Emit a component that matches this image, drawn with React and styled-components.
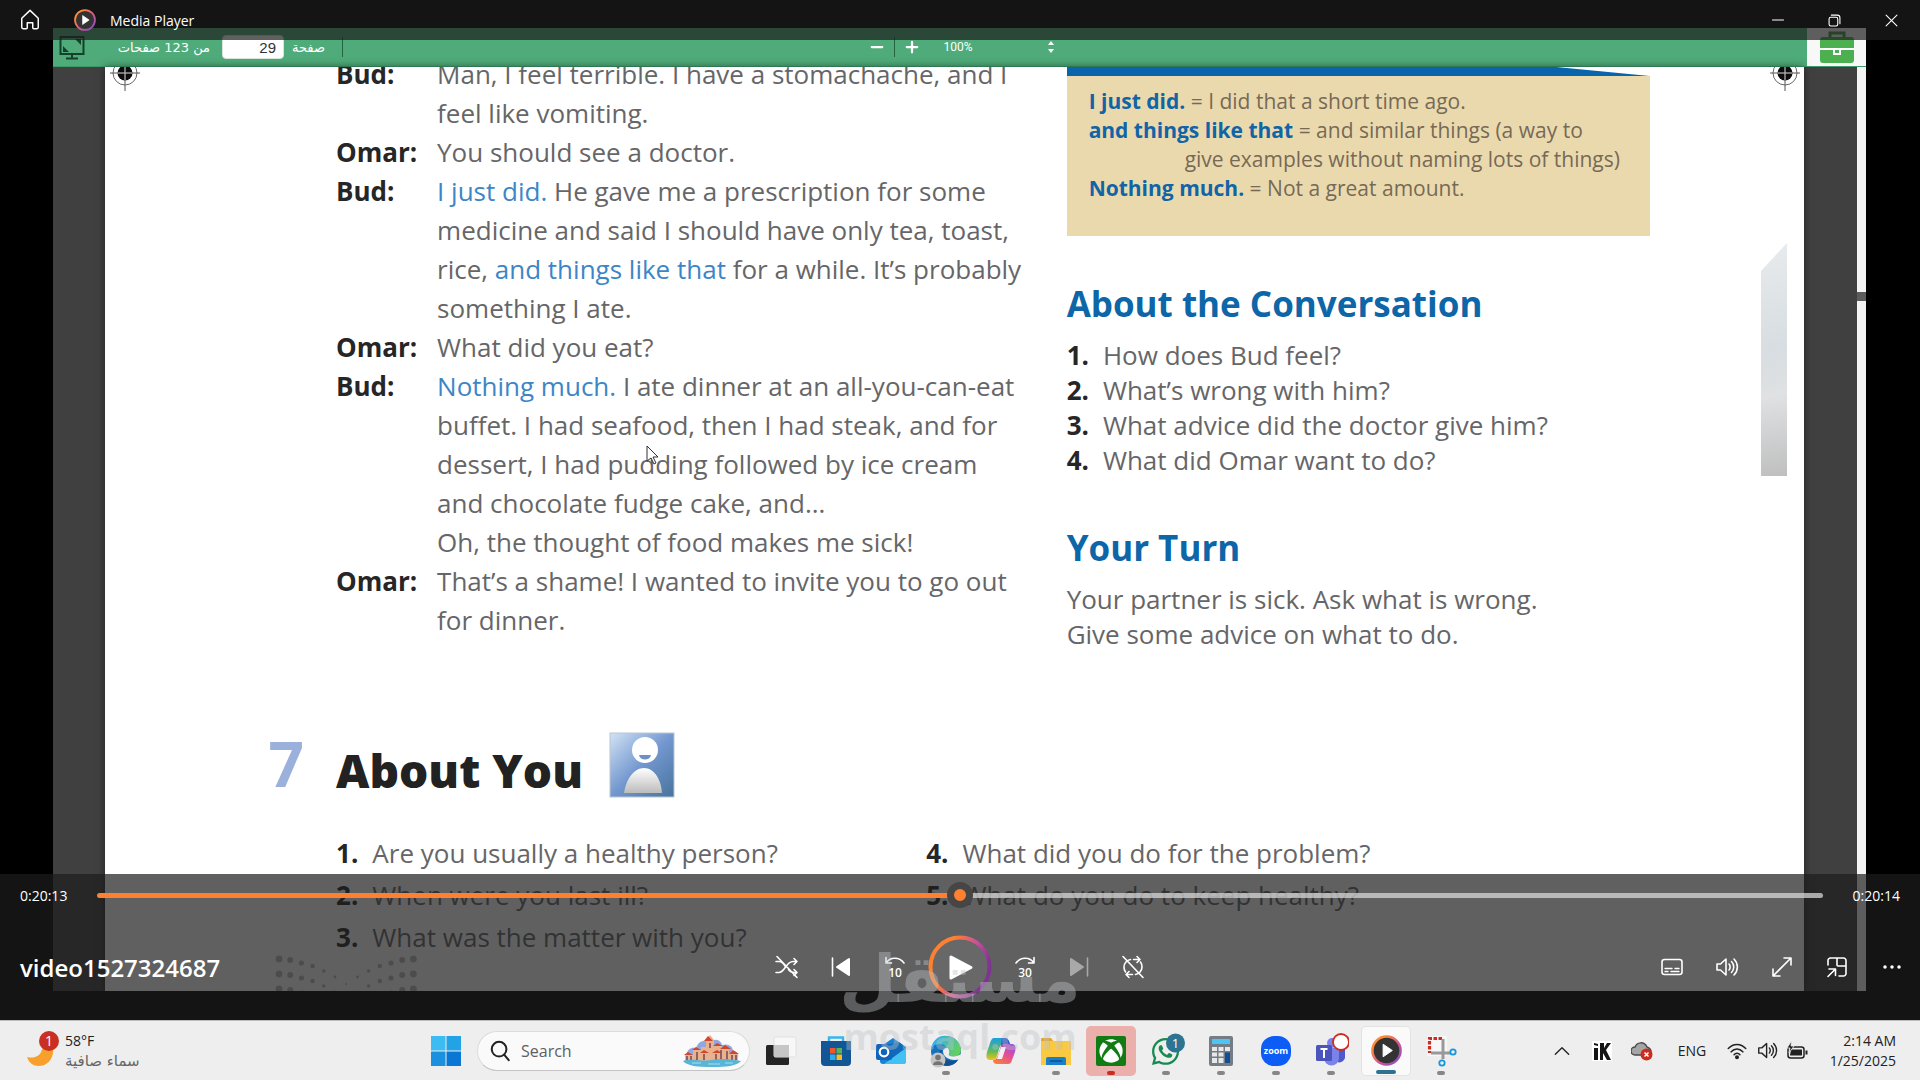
import React, { useState } from 'react'
import styled, { createGlobalStyle, css } from 'styled-components'
import { FaXbox, FaWhatsapp } from 'react-icons/fa'

const GlobalStyle = createGlobalStyle`
    *, *::before, *::after {
        box-sizing: border-box;
    }
    body {
        margin: 0;
        background: #000;
        font-family: 'Open Sans', 'Noto Sans', 'DejaVu Sans', sans-serif;
    }
    h1, h2, p, dl, dd, dt, ol {
        margin: 0;
        padding: 0;
    }
    button, input, select {
        font: inherit;
        color: inherit;
    }
    svg {
        display: block;
    }
`

const Desktop = styled.div`
    display: flex;
    flex-direction: column;
    height: 100vh;
    overflow: hidden;
`

const Player = styled.main`
    position: relative;
    display: flex;
    flex: 1;
    min-height: 0;
    padding: 28px 54px 29px 53px;
    background: #000;
    color: #fff;
`

const PlainButton = styled.button`
    display: flex;
    align-items: center;
    justify-content: center;
    padding: 0;
    border: 0;
    background: transparent;
`

/* title bar */

const TitleBar = styled.header`
    position: absolute;
    inset: 0 0 auto;
    display: flex;
    align-items: center;
    height: 40px;
    padding-left: 10px;
    background: rgba(28, 28, 28, 0.7);
`

const HomeButton = styled(PlainButton)`
    width: 40px;
    height: 40px;
`

const AppName = styled.span`
    display: flex;
    flex: 1;
    align-items: center;
    gap: 14px;
    padding-left: 24px;
    font-size: 14px;
`

const WindowButton = styled(PlainButton)`
    width: 57px;
    height: 38px;
`

/* recorded screen */

const Recording = styled.div`
    display: flex;
    flex: 1;
    flex-direction: column;
    min-width: 0;
    overflow: hidden;
    background: #404040;
`

const ReaderBar = styled.div`
    display: grid;
    grid-template-columns: 1fr auto 1fr;
    align-items: center;
    height: 39px;
    flex-shrink: 0;
    border-bottom: 1px solid #3f9a6a;
    background: #4fab79;
    font-size: 13px;
`

const PageJump = styled.div`
    display: flex;
    align-items: center;
    gap: 6px;
    padding-left: 6px;
    font-family: 'DejaVu Sans', sans-serif;
    font-size: 13px;
`

const PageCount = styled.span`
    width: 125px;
    padding-right: 6px;
    text-align: right;
    white-space: nowrap;
`

const PageLabel = styled.label`
    width: 46px;
    padding-left: 2px;
`

const PageInput = styled.input`
    width: 62px;
    height: 24px;
    padding: 0 7px;
    border: 1px solid #d8e6dd;
    border-radius: 4px;
    background: #fff;
    color: #333;
    font-family: 'Liberation Sans', sans-serif;
    font-size: 15px;
    font-weight: 400;
    text-align: right;
`

const Divider = styled.i`
    width: 1px;
    height: 20px;
    background: #23633f;
`

const ZoomTools = styled.div`
    display: flex;
    align-items: center;
    gap: 7px;
    padding-left: 2px;
`

const ZoomButton = styled(PlainButton)`
    width: 20px;
    height: 24px;
`

const ZoomSelect = styled.select`
    width: 96px;
    margin-left: 15px;
    padding: 0;
    border: 0;
    appearance: none;
    background: transparent;
    font-family: Roboto, sans-serif;
    font-size: 12px;
`

const Toolbox = styled(PlainButton)`
    justify-self: end;
    width: 59px;
    height: 38px;
    background: #f8f8f8;
`

const Viewport = styled.div`
    display: flex;
    flex: 1;
    min-height: 0;
    padding-left: 52px;
`

const Scrollbar = styled.div`
    width: 9px;
    margin-left: 53px;
    padding-top: 225px;
    background: #f4f4f4;
`

const ScrollThumb = styled.div`
    height: 9px;
    background: #5c5c5c;
`

const Page = styled.article`
    position: relative;
    flex: 1;
    min-width: 0;
    overflow: hidden;
    background: #fff;
    box-shadow: 0 0 8px rgba(0, 0, 0, 0.5);
    color: #666668;
    font-family: 'Open Sans', sans-serif;
    font-weight: 400;
    white-space: nowrap;
`

const CropMark = styled.svg`
    position: absolute;
    top: -9px;
    ${(p) => (p.$right ? 'right: 4px;' : 'left: 5px;')}
`

const Conversation = styled.section`
    display: grid;
    grid-template-columns: 13.6% 43% 1fr 43px;
`

const Dialogue = styled.dl`
    display: grid;
    grid-column: 2;
    grid-template-columns: 101px 1fr;
    align-content: start;
    margin-top: -12px;
    font-size: 26px;
    line-height: 39px;
`

const Speaker = styled.dt`
    color: #262626;
    font-weight: 700;
`

const Phrase = styled.span`
    color: #3d86c6;
`

const Aside = styled.div`
    font-size: 26px;
    line-height: 35px;
`

const Glossary = styled.div`
    width: 583px;
    max-width: 100%;
    padding: 11px 22px 33px;
    background: #ebd9ae;
    color: #766a56;
    font-size: 21px;
    line-height: 29px;

    b {
        color: #1164a6;
        font-weight: 700;
    }
`

const GlossaryTop = styled.div`
    width: 583px;
    max-width: 100%;
    height: 9px;
    background: #0865ab;
    clip-path: polygon(0 0, 84% 0, 100% 100%, 0 100%);
`

const Indented = styled.span`
    padding-left: 96px;
`

const Heading = styled.h2`
    margin: ${(p) => p.$top}px 0 12px;
    color: #0d66a8;
    font-size: 35px;
    font-weight: 700;
    line-height: 44px;
`

const Questions = styled.ol`
    list-style: none;

    b {
        margin-right: 14px;
        color: #262626;
        font-weight: 700;
    }
`

const Photo = styled.div`
    width: 26px;
    height: 233px;
    margin-top: 176px;
    background: linear-gradient(170deg, #e8ebed, #d7dde1 45%, #dfe1e3 65%, #bfbfbf);
    clip-path: polygon(0 12%, 100% 0, 100% 100%, 0 100%);
`

const AboutYou = styled.section`
    display: grid;
    grid-template-columns: 13.6% 1fr;
    margin-top: 80px;
    font-size: 26px;
    line-height: 42px;
`

const UnitNumber = styled.span`
    padding-right: 32px;
    color: #9bb1db;
    font-size: 62px;
    font-weight: 700;
    line-height: 62px;
    text-align: right;
`

const UnitTitle = styled.h1`
    display: flex;
    align-items: flex-end;
    gap: 26px;
    height: 66px;
    color: #222;
    font-size: 46px;
    font-weight: 800;
    line-height: 56px;
`

const QuestionColumns = styled.div`
    display: grid;
    grid-column: 2;
    grid-template-columns: 40.2% 1fr;
    margin-top: 34px;
`

const Dots = styled.svg`
    margin: -6px 0 0 10%;
`

const Pointer = styled.svg`
    position: absolute;
    top: 445px;
    left: 646px;
`

/* transport controls */

const Controls = styled.footer`
    position: absolute;
    inset: auto 0 0;
    padding-bottom: 2px;
    background: rgba(28, 28, 28, 0.7);
`

const Timeline = styled.div`
    display: flex;
    align-items: center;
    gap: 30px;
    height: 42px;
    padding: 0 20px;
    font-size: 14px;
`

const Seek = styled.input`
    flex: 1;
    min-width: 0;
    height: 26px;
    margin: 0;
    appearance: none;
    background: transparent;

    &::-webkit-slider-runnable-track {
        height: 5px;
        border-radius: 3px;
        background: linear-gradient(to right, #ff8030 50%, rgba(214, 214, 214, 0.75) 50%);
    }
    &::-webkit-slider-thumb {
        width: 26px;
        height: 26px;
        margin-top: -11px;
        border: 7px solid #464646;
        border-radius: 50%;
        appearance: none;
        background: #ff8030;
    }
`

const ControlRow = styled.div`
    display: grid;
    grid-template-columns: 1fr auto 1fr;
    align-items: center;
    height: 102px;
    padding: 0 4px;
`

const FileName = styled.span`
    padding-left: 16px;
    font-size: 24px;
    font-weight: 600;
`

const ButtonGroup = styled.div`
    display: flex;
    align-items: center;
    gap: ${(p) => p.$gap}px;
    justify-content: flex-end;
`

const ControlButton = styled(PlainButton)`
    width: 48px;
    height: 48px;
    opacity: ${(p) => (p.disabled ? 0.45 : 1)};
`

const PlayButton = styled(PlainButton)`
    width: 64px;
    height: 64px;
    margin: 0 3px;
`

const Watermark = styled.div`
    position: absolute;
    top: 943px;
    left: 50%;
    transform: translateX(-50%);
    color: rgba(190, 194, 198, 0.42);
    font-size: 36px;
    font-weight: 700;
    line-height: 40px;
    text-align: center;
    pointer-events: none;
    z-index: 2;
`

const WatermarkArabic = styled.div`
    font-family: 'DejaVu Sans', sans-serif;
    font-size: 66px;
    line-height: 74px;
`

/* taskbar */

const Taskbar = styled.nav`
    display: grid;
    grid-template-columns: 421px 1fr auto;
    align-items: center;
    height: 60px;
    flex-shrink: 0;
    border-top: 1px solid #bdbdbd;
    background: #eee;
    color: #222;
    font-size: 14px;
    line-height: 20px;
`

const Weather = styled(PlainButton)`
    justify-content: flex-start;
    gap: 6px;
    padding-left: 26px;
    text-align: left;

    small {
        display: block;
        color: #666;
        font-family: 'DejaVu Sans', sans-serif;
        font-size: 15px;
    }
`

const Apps = styled.div`
    display: flex;
    align-items: center;
    gap: 5px;
`

const AppButton = styled(PlainButton)`
    position: relative;
    width: 50px;
    height: 50px;
    border-radius: 5px;
    ${(p) =>
        p.$tone === 'alert' &&
        css`
            background: #ebb0ac;
        `}
    ${(p) =>
        p.$tone === 'active' &&
        css`
            border: 1px solid #e3e3e3;
            background: #fafafa;
        `}
`

const Running = styled.i`
    position: absolute;
    bottom: 1px;
    left: 50%;
    width: ${(p) => (p.$tone === 'active' ? 20 : 8)}px;
    height: 4px;
    border-radius: 2px;
    transform: translateX(-50%);
    background: ${(p) => ({ active: '#2c7492', alert: '#cc2b20' })[p.$tone] || '#868686'};
`

const SearchBox = styled.label`
    display: flex;
    align-items: center;
    gap: 10px;
    width: 273px;
    height: 40px;
    margin-left: 1px;
    margin-right: 1px;
    padding: 0 8px 0 11px;
    border: 1px solid #dcdcdc;
    border-bottom-color: #c4c4c4;
    border-radius: 20px;
    background: #fafafa;
`

const SearchInput = styled.input`
    flex: 1;
    min-width: 0;
    padding: 0;
    border: 0;
    background: transparent;
    font-size: 16px;

    &::placeholder {
        color: #606060;
        opacity: 1;
    }
`

const Tray = styled.div`
    display: flex;
    align-items: center;
    padding-right: 24px;
`

const TrayButton = styled(PlainButton)`
    width: ${(p) => p.$w || 30}px;
    height: 40px;
`

const Clock = styled.time`
    width: 84px;
    text-align: right;
`

function Stroke({ size = 24, width = 1.6, children }) {
    return (
        <svg
            width={size}
            height={size}
            viewBox="0 0 24 24"
            fill="none"
            stroke="currentColor"
            strokeWidth={width}
            strokeLinecap="round"
            strokeLinejoin="round"
        >
            {children}
        </svg>
    )
}

function PlayerLogo({ size }) {
    return (
        <svg width={size} height={size} viewBox="0 0 32 32">
            <defs>
                <linearGradient id={`ring${size}`} x1="0" y1="0" x2="1" y2="1">
                    <stop offset="0.2" stopColor="#ff8a35" />
                    <stop offset="0.6" stopColor="#cf5593" />
                    <stop offset="1" stopColor="#7c4dcc" />
                </linearGradient>
            </defs>
            <circle cx="16" cy="16" r="14.5" fill="#333" stroke={`url(#ring${size})`} strokeWidth="2.6" />
            <path d="M12.5 9.5v13L22 16z" fill="#fff" stroke="#fff" strokeLinejoin="round" />
        </svg>
    )
}

function Mark({ right }) {
    return (
        <CropMark $right={right} width="30" height="34" viewBox="0 0 30 34">
            <circle cx="15" cy="15" r="12" fill="none" stroke="#666" />
            <circle cx="15" cy="15" r="7.5" fill="#0c0c0c" />
            <path d="M0 15h30M15 0v33" stroke="#555" />
            <path d="M8 15h14M15 8v14" stroke="#bbb" />
        </CropMark>
    )
}

const dialogue = [
    ['Bud:', <>Man, I feel terrible. I have a stomachache, and I<br />feel like vomiting.</>],
    ['Omar:', 'You should see a doctor.'],
    [
        'Bud:',
        <>
            <Phrase>I just did.</Phrase> He gave me a prescription for some<br />
            medicine and said I should have only tea, toast,<br />
            rice, <Phrase>and things like that</Phrase> for a while. It’s probably<br />
            something I ate.
        </>,
    ],
    ['Omar:', 'What did you eat?'],
    [
        'Bud:',
        <>
            <Phrase>Nothing much.</Phrase> I ate dinner at an all-you-can-eat<br />
            buffet. I had seafood, then I had steak, and for<br />
            dessert, I had pudding followed by ice cream<br />
            and chocolate fudge cake, and...<br />
            Oh, the thought of food makes me sick!
        </>,
    ],
    ['Omar:', <>That’s a shame! I wanted to invite you to go out<br />for dinner.</>],
]

function QuestionList({ items, start = 1 }) {
    return (
        <Questions>
            {items.map((text, i) => (
                <li key={text}>
                    <b>{start + i}.</b>
                    {text}
                </li>
            ))}
        </Questions>
    )
}

function PersonBadge() {
    return (
        <svg width="66" height="66" viewBox="0 0 66 66">
            <defs>
                <linearGradient id="badge" x1="0" y1="0" x2="1" y2="1">
                    <stop offset="0" stopColor="#d2e3f4" />
                    <stop offset="0.5" stopColor="#7397cf" />
                    <stop offset="1" stopColor="#47749c" />
                </linearGradient>
                <linearGradient id="body" x1="0" y1="0" x2="0" y2="1">
                    <stop offset="0" stopColor="#fff" />
                    <stop offset="1" stopColor="#bcbcbc" />
                </linearGradient>
            </defs>
            <rect x="1" y="1" width="64" height="64" fill="url(#badge)" stroke="#bac6d2" />
            <ellipse cx="36" cy="18" rx="13" ry="13" fill="#fff" />
            <path d="M30 23h12c-1 6-11 6-12 0z" fill="#6a93c4" />
            <path d="M15 61c2-14 10-25 20-25s17 11 18 25z" fill="url(#body)" />
        </svg>
    )
}

const dotDrop = [0, 1, 4, 7, 12, 18, 25]

function DotPattern() {
    const dots = []
    for (let row = 0; row < 3; row += 1) {
        for (let col = 0; col < 13; col += 1) {
            const edge = Math.abs(col - 6)
            dots.push(
                <circle
                    key={`${row}-${col}`}
                    cx={4 + col * 11.2}
                    cy={7 + row * 15 + dotDrop[6 - edge]}
                    r={1 + edge * 0.4}
                />
            )
        }
    }
    return (
        <Dots width="144" height="48" viewBox="0 0 144 48" fill="#bdbdbd">
            {dots}
        </Dots>
    )
}

function BookPage() {
    return (
        <Page>
            <Mark />
            <Mark right />
            <Conversation>
                <Dialogue>
                    {dialogue.map(([who, line], i) => (
                        <React.Fragment key={i}>
                            <Speaker>{who}</Speaker>
                            <dd>{line}</dd>
                        </React.Fragment>
                    ))}
                </Dialogue>
                <Aside>
                    <GlossaryTop />
                    <Glossary>
                        <b>I just did.</b> = I did that a short time ago.<br />
                        <b>and things like that</b> = and similar things (a way to<br />
                        <Indented>give examples without naming lots of things)</Indented><br />
                        <b>Nothing much.</b> = Not a great amount.
                    </Glossary>
                    <Heading $top={46}>About the Conversation</Heading>
                    <QuestionList
                        items={[
                            'How does Bud feel?',
                            'What’s wrong with him?',
                            'What advice did the doctor give him?',
                            'What did Omar want to do?',
                        ]}
                    />
                    <Heading $top={48}>Your Turn</Heading>
                    <p>
                        Your partner is sick. Ask what is wrong.<br />
                        Give some advice on what to do.
                    </p>
                </Aside>
                <Photo />
            </Conversation>
            <AboutYou>
                <UnitNumber>7</UnitNumber>
                <UnitTitle>
                    About You
                    <PersonBadge />
                </UnitTitle>
                <QuestionColumns>
                    <QuestionList
                        items={['Are you usually a healthy person?', 'When were you last ill?', 'What was the matter with you?']}
                    />
                    <QuestionList start={4} items={['What did you do for the problem?', 'What do you do to keep healthy?']} />
                </QuestionColumns>
            </AboutYou>
            <DotPattern />
        </Page>
    )
}

function Reader() {
    return (
        <Recording>
            <ReaderBar>
                <PageJump>
                    <svg width="26" height="26" viewBox="0 0 26 26" fill="none" stroke="#17402b" strokeWidth="2">
                        <path d="M1.5 3h23v17h-23zM13 20v4M7 24.5h12" />
                        <path d="M16 5h6v6zM10 18H4v-6z" fill="#17402b" stroke="none" />
                    </svg>
                    <PageCount>
                        <bdi dir="rtl">من 123 صفحات</bdi>
                    </PageCount>
                    <PageInput id="page" defaultValue="29" />
                    <PageLabel htmlFor="page">صفحة</PageLabel>
                    <Divider />
                </PageJump>
                <ZoomTools>
                    <ZoomButton aria-label="Zoom out">
                        <Stroke size={18} width={3}><path d="M5 12h14" /></Stroke>
                    </ZoomButton>
                    <Divider />
                    <ZoomButton aria-label="Zoom in">
                        <Stroke size={18} width={3}><path d="M5 12h14M12 5v14" /></Stroke>
                    </ZoomButton>
                    <ZoomSelect aria-label="Zoom level">
                        <option>100%</option>
                    </ZoomSelect>
                    <svg width="8" height="12" viewBox="0 0 8 12" fill="#fff">
                        <path d="M4 0l3 4H1zM4 12l3-4H1z" />
                    </svg>
                </ZoomTools>
                <Toolbox aria-label="Toolbox">
                    <svg width="36" height="32" viewBox="0 0 36 32">
                        <path d="M11 8V2h14v6" fill="none" stroke="#3d9943" strokeWidth="3" />
                        <rect x="1" y="6" width="34" height="26" rx="3" fill="#4caf50" />
                        <path d="M1 18h34" stroke="#fff" strokeWidth="2" />
                        <path d="M15 18v5h6v-5" fill="none" stroke="#fff" strokeWidth="2" />
                    </svg>
                </Toolbox>
            </ReaderBar>
            <Viewport>
                <BookPage />
                <Scrollbar>
                    <ScrollThumb />
                </Scrollbar>
            </Viewport>
        </Recording>
    )
}

function PlayerControls() {
    const [position, setPosition] = useState(50)
    return (
        <Controls>
            <Timeline>
                <span>0:20:13</span>
                <Seek type="range" aria-label="Seek" value={position} onChange={(e) => setPosition(e.target.value)} />
                <span>0:20:14</span>
            </Timeline>
            <ControlRow>
                <FileName>video1527324687</FileName>
                <ButtonGroup $gap={6}>
                    <ControlButton aria-label="Shuffle off">
                        <Stroke>
                            <path d="M1 6.5h3c3 0 4.500 2 6 4.500M13.500 14.500c1.500 2 3 3 5.500 3h3M1 17.500h3c6 0 7-11 14-11h4M19 3.500l3 3-3 3M19 14.500l3 3-3 3M2 1.500l20 21" />
                        </Stroke>
                    </ControlButton>
                    <ControlButton aria-label="Previous">
                        <Stroke>
                            <path d="M3.500 3v18" />
                            <path d="M20 4v16L8 12z" fill="currentColor" strokeWidth="2" />
                        </Stroke>
                    </ControlButton>
                    <ControlButton aria-label="Skip back 10 seconds">
                        <Stroke>
                            <path d="M3 2.500V8h5.500M3 8c4-6 13-6.500 18 0" />
                            <text x="12" y="22" textAnchor="middle" fontSize="12" fontWeight="600" fill="currentColor" stroke="none">10</text>
                        </Stroke>
                    </ControlButton>
                    <PlayButton aria-label="Play">
                        <svg width="64" height="64" viewBox="0 0 64 64">
                            <defs>
                                <linearGradient id="play" x1="0" y1="0.3" x2="1" y2="0.7">
                                    <stop offset="0.25" stopColor="#ff8030" />
                                    <stop offset="0.6" stopColor="#c8509a" />
                                    <stop offset="0.9" stopColor="#7d3590" />
                                </linearGradient>
                            </defs>
                            <circle cx="32" cy="32" r="29.500" fill="rgba(255,255,255,0.05)" stroke="url(#play)" strokeWidth="4" />
                            <path d="M23 22v21L43 32.500z" fill="#fff" stroke="#fff" strokeWidth="3" strokeLinejoin="round" />
                        </svg>
                    </PlayButton>
                    <ControlButton aria-label="Skip forward 30 seconds">
                        <Stroke>
                            <path d="M21 2.500V8h-5.500M21 8c-4-6-13-6.500-18 0" />
                            <text x="12" y="22" textAnchor="middle" fontSize="12" fontWeight="600" fill="currentColor" stroke="none">30</text>
                        </Stroke>
                    </ControlButton>
                    <ControlButton aria-label="Next" disabled>
                        <Stroke>
                            <path d="M20.500 3v18" />
                            <path d="M4 4v16l12-8z" fill="currentColor" strokeWidth="2" />
                        </Stroke>
                    </ControlButton>
                    <ControlButton aria-label="Repeat off">
                        <Stroke>
                            <path d="M4.500 17A8 8 0 0 1 3 12c0-4 3-7 6.500-7.500M12.500 4.500H19M16 1.500l3 3-3 3M19.500 7A8 8 0 0 1 21 12c0 4-3 7-6.500 7.500M11.500 19.500H5M8 16.500l-3 3 3 3M2 1.500l20 21" />
                        </Stroke>
                    </ControlButton>
                </ButtonGroup>
                <ButtonGroup $gap={7}>
                    <ControlButton aria-label="Subtitles">
                        <Stroke>
                            <rect x="2" y="4.500" width="20" height="15" rx="2.500" />
                            <path d="M5 13.500h7M15 13.500h4M5 16.500h3M11 16.500h8" strokeWidth="1.300" />
                        </Stroke>
                    </ControlButton>
                    <ControlButton aria-label="Volume">
                        <Stroke>
                            <path d="M2 9v6h3.500L11 20V4L5.500 9zM14 9c1.500 1.500 1.500 4.500 0 6M16.500 6.500c3 3 3 8 0 11M19 4c4.500 4.500 4.500 11.500 0 16" />
                        </Stroke>
                    </ControlButton>
                    <ControlButton aria-label="Full screen">
                        <Stroke><path d="M14 3h7v7M21 3L3 21M3 14v7h7" /></Stroke>
                    </ControlButton>
                    <ControlButton aria-label="Mini player">
                        <Stroke>
                            <path d="M3 10V5.500A2.500 2.500 0 0 1 5.500 3h13A2.500 2.500 0 0 1 21 5.500v13a2.500 2.500 0 0 1-2.500 2.500H14M12 3v7a1 1 0 0 0 1 1h8M4 14h6.500v6.500M10.500 14L3 21.500" />
                        </Stroke>
                    </ControlButton>
                    <ControlButton aria-label="More">
                        <Stroke width={3.500}><path d="M5 12h.01M12 12h.01M19 12h.01" /></Stroke>
                    </ControlButton>
                </ButtonGroup>
            </ControlRow>
        </Controls>
    )
}

const icons = {
    start: (
        <svg width="30" height="30" viewBox="0 0 30 30">
            <path d="M0 0h14.500v14.500H0z" fill="#3cbcf2" />
            <path d="M15.500 0H30v14.500H15.500z" fill="#22a3e6" />
            <path d="M0 15.500h14.500V30H0z" fill="#1a90de" />
            <path d="M15.500 15.500H30V30H15.500z" fill="#0b77d4" />
        </svg>
    ),
    taskview: (
        <svg width="32" height="32" viewBox="0 0 32 32">
            <rect x="1" y="10" width="23" height="20" rx="1.500" fill="#242424" />
            <rect x="9" y="2" width="22" height="20" rx="1.500" fill="#f7f7f7" stroke="#e0e0e0" />
            <path d="M9 10h15v12H9z" fill="#c6c6c6" />
        </svg>
    ),
    store: (
        <svg width="32" height="32" viewBox="0 0 32 32">
            <path d="M9 7V2.500h14V7" fill="none" stroke="#36b6ee" strokeWidth="2.400" />
            <path d="M1 6h30v21a4 4 0 0 1-4 4H5a4 4 0 0 1-4-4z" fill="#125696" />
            <path d="M10 13h5.500v5.500H10z" fill="#f1552c" />
            <path d="M16.500 13H22v5.500h-5.500z" fill="#54b353" />
            <path d="M10 19.500h5.500V25H10z" fill="#29aee9" />
            <path d="M16.500 19.500H22V25h-5.500z" fill="#fcba1c" />
        </svg>
    ),
    outlook: (
        <svg width="32" height="32" viewBox="0 0 32 32">
            <path d="M5 12L18 3l13 9v14a3 3 0 0 1-3 3H8a3 3 0 0 1-3-3z" fill="#1a82d4" />
            <path d="M7 11l17-4 7 6-18 14z" fill="#1169b9" />
            <path d="M31 13v13a3 3 0 0 1-3 3H9z" fill="#43c1f2" />
            <rect x="1" y="9" width="16" height="16" rx="2" fill="#0f64bc" />
            <circle cx="9" cy="17" r="4.300" fill="none" stroke="#fff" strokeWidth="2.200" />
        </svg>
    ),
    edge: (
        <svg width="34" height="34" viewBox="0 0 34 34">
            <defs>
                <linearGradient id="edge" x1="0" y1="0" x2="1" y2="0.400">
                    <stop offset="0.200" stopColor="#2bb3ec" />
                    <stop offset="1" stopColor="#62cf61" />
                </linearGradient>
            </defs>
            <circle cx="17" cy="17" r="15" fill="#1672bd" />
            <path d="M2 15C4 5 11 1 18 2c9 1 14 8 14 14 0 5-5 8-12 6-2-1 1-3-1-7C15 8 5 9 2 15z" fill="url(#edge)" />
            <path d="M13 15c-3 7 5 14 16 11-4 6-10 7-15 5-7-4-6-13-1-16z" fill="#12518f" />
            <path d="M19 14c3 5-1 7 2 8 4 1 8 0 11-2l-1 5c-8 3-17-1-17-8 0-2 3-4 5-3z" fill="#eee" />
            <circle cx="9" cy="26" r="7.500" fill="#c4c4c4" />
            <circle cx="9" cy="23.500" r="2.800" fill="#747474" />
            <path d="M4 31c0-5 10-5 10 0z" fill="#747474" />
        </svg>
    ),
    copilot: (
        <svg width="32" height="32" viewBox="0 0 32 32">
            <defs>
                <linearGradient id="cpa" x1="0" y1="0" x2="0" y2="1">
                    <stop offset="0" stopColor="#18a0e4" />
                    <stop offset="0.600" stopColor="#5dbb57" />
                    <stop offset="1" stopColor="#f3c01c" />
                </linearGradient>
                <linearGradient id="cpb" x1="0.800" y1="0" x2="0.200" y2="1">
                    <stop offset="0" stopColor="#9b4de0" />
                    <stop offset="0.500" stopColor="#e64f92" />
                    <stop offset="1" stopColor="#f98038" />
                </linearGradient>
            </defs>
            <path d="M9 3h11c3 0 4 3 5 6h-6c-3 0-4 2-5 5l-2 7c-1 3-2 4-5 4H5c-4 0-4-4-3-8l3-9c1-3 2-5 4-5z" fill="url(#cpa)" />
            <path d="M17 3h3c3 0 4 3 5 6h-6l-3 2z" fill="#2156c9" />
            <path d="M23 29H12c-3 0-4-2-4-4 3 0 4-2 5-5l2-6c1-4 2-5 5-5h7c4 0 4 4 3 8l-3 8c-1 3-2 4-4 4z" fill="url(#cpb)" />
            <path d="M16 12h5l-4 12h-5z" fill="#f4f0f2" />
        </svg>
    ),
    explorer: (
        <svg width="32" height="32" viewBox="0 0 32 32">
            <path d="M1 4a1 1 0 0 1 1-1h9l3 4H1z" fill="#e3a62a" />
            <path d="M1 6h29a1 1 0 0 1 1 1v23H1z" fill="#f9c941" />
            <path d="M6 24a2 2 0 0 1 2-2h16a2 2 0 0 1 2 2v6H6z" fill="#1a7ecb" />
            <path d="M10 26h12" stroke="#0d5ba3" strokeWidth="2" />
        </svg>
    ),
    xbox: (
        <svg width="30" height="30" viewBox="0 0 30 30">
            <rect width="30" height="30" rx="2" fill="#127c14" />
            <FaXbox x="3" y="3" size={24} color="#fff" />
        </svg>
    ),
    whatsapp: (
        <svg width="38" height="36" viewBox="0 0 38 36">
            <FaWhatsapp x="3" y="3" size={31} color="#178a50" />
            <circle cx="28.500" cy="10" r="9.500" fill="#2c7492" />
            <text x="28.500" y="15" textAnchor="middle" fontSize="13" fill="#fff">1</text>
        </svg>
    ),
    calculator: (
        <svg width="24" height="30" viewBox="0 0 24 30">
            <rect width="24" height="30" rx="2" fill="#747c85" />
            <path d="M3 3h18v5H3z" fill="#4cc5f3" />
            <path d="M3 11h5v4H3zM9.500 11h5v4h-5zM16 11h5v4h-5zM3 16.500h5v4H3zM9.500 16.500h5v4h-5zM3 22h5v5H3zM9.500 22h5v5h-5z" fill="#e6e8ea" />
            <path d="M16 16.500h5V27h-5z" fill="#104f93" />
        </svg>
    ),
    zoom: (
        <svg width="30" height="30" viewBox="0 0 30 30">
            <rect width="30" height="30" rx="13" fill="#0d5cf5" />
            <text x="15" y="18" textAnchor="middle" fontSize="9" fontWeight="700" fill="#fff">zoom</text>
        </svg>
    ),
    teams: (
        <svg width="36" height="36" viewBox="0 0 36 36">
            <circle cx="19" cy="10" r="5" fill="#7b83eb" />
            <path d="M24 15h8v10a6 6 0 0 1-8 4z" fill="#5059c9" />
            <path d="M11 15h15v10a7.500 7.500 0 0 1-15 0z" fill="#7b83eb" />
            <rect x="3" y="12" width="16" height="16" rx="1.500" fill="#4b53bc" />
            <path d="M7.500 16h7M11 16v9" stroke="#fff" strokeWidth="2" />
            <circle cx="28" cy="9" r="8" fill="#fff" stroke="#cc2b20" strokeWidth="1.800" />
        </svg>
    ),
    player: <PlayerLogo size={31} />,
    snip: (
        <svg width="32" height="34" viewBox="0 0 32 34">
            <path d="M2 2h20v20H2z" fill="#f7f7f7" />
            <path d="M17 4.500H4.500V19" fill="none" stroke="#cc2b20" strokeWidth="3.200" strokeDasharray="3.500 1.500" />
            <path d="M18 5v20M6 19h20" stroke="#999" strokeWidth="3" />
            <circle cx="28" cy="18" r="2.700" fill="none" stroke="#1598e0" strokeWidth="1.800" />
            <circle cx="17" cy="29" r="2.700" fill="none" stroke="#1598e0" strokeWidth="1.800" />
        </svg>
    ),
}

const apps = [
    { id: 'taskview', label: 'Task view' },
    { id: 'store', label: 'Microsoft Store' },
    { id: 'outlook', label: 'Outlook' },
    { id: 'edge', label: 'Microsoft Edge', running: true },
    { id: 'copilot', label: 'Copilot' },
    { id: 'explorer', label: 'File Explorer', running: true },
    { id: 'xbox', label: 'Xbox', running: true, tone: 'alert' },
    { id: 'whatsapp', label: 'WhatsApp', running: true },
    { id: 'calculator', label: 'Calculator', running: true },
    { id: 'zoom', label: 'Zoom', running: true },
    { id: 'teams', label: 'Teams', running: true },
    { id: 'player', label: 'Media Player', running: true, tone: 'active' },
    { id: 'snip', label: 'Snipping Tool', running: true },
]

function Harbour() {
    return (
        <svg width="58" height="32" viewBox="0 0 58 32">
            <path d="M4 21c-1-7 5-9 9-8 2-7 9-9 14-6 5-4 11-2 12 3 7-2 11 2 11 6 4 0 6 3 5 7z" fill="#91a8df" />
            <path d="M2 20h8v-5h8v-3h5V5l4-5 4 5v6h8v3h7v4h9v8H2z" fill="#e9b28f" />
            <path d="M1 20l4-3 5 3zM9 15l4-3 5 3zM21 6l4-5 5 5zM30 11l4-3 6 3zM37 14l5-4 6 4zM46 19l4-4 6 4zM17 18l4-3 5 3zM29 18l5-3 5 3z" fill="#d2452f" />
            <path d="M4 21v5M8 21v5M14 17v8M21 19v6M27 8v5M33 19v6M38 15v10M44 16v9M49 20v5M53 20v5" stroke="#7d4c53" strokeWidth="1.600" />
            <path d="M0 26c10-3 18 1 28-1s20-1 30 1c-4 5-15 6-29 6S4 31 0 26z" fill="#57b5d8" />
            <path d="M9 28h9M25 29h12M42 28h8" stroke="#a8deee" />
        </svg>
    )
}

function TaskbarRow() {
    return (
        <Taskbar aria-label="Taskbar">
            <Weather>
                <svg width="33" height="40" viewBox="0 0 33 40">
                    <path d="M25 12c6 12-2 23-12 23-6 0-10-3-12-9 7 2 14-1 15-8z" fill="#f7a02b" />
                    <circle cx="23" cy="10" r="10" fill="#c92f22" />
                    <text x="23" y="15" textAnchor="middle" fontSize="14" fill="#fff">1</text>
                </svg>
                <span>
                    58°F
                    <small dir="rtl">سماء صافية</small>
                </span>
            </Weather>
            <Apps>
                <AppButton aria-label="Start">{icons.start}</AppButton>
                <SearchBox>
                    <Stroke size={22} width={2.200}>
                        <circle cx="11" cy="10" r="8" />
                        <path d="M16.500 16l5 6" />
                    </Stroke>
                    <SearchInput placeholder="Search" aria-label="Search" />
                    <Harbour />
                </SearchBox>
                {apps.map(({ id, label, running, tone }) => (
                    <AppButton key={id} aria-label={label} $tone={tone}>
                        {icons[id]}
                        {running && <Running $tone={tone} />}
                    </AppButton>
                ))}
            </Apps>
            <Tray>
                <TrayButton $w={40} aria-label="Hidden icons">
                    <Stroke size={20}><path d="M4 16l8-8 8 8" /></Stroke>
                </TrayButton>
                <TrayButton $w={40} aria-label="Keyboard">
                    <svg width="20" height="20" viewBox="0 0 20 20">
                        <path d="M0 0h20v20H0z" fill="#fff" />
                        <path d="M2 7h4v12H2zM2 2l4 1v2L2 4zM8 2h4v5l3-5h4l-5 7 5 10h-4L11 12v7H8z" fill="#141414" />
                    </svg>
                </TrayButton>
                <TrayButton $w={40} aria-label="OneDrive error">
                    <svg width="22" height="20" viewBox="0 0 22 20">
                        <path d="M4 14a4 4 0 0 1 0-8c2-5 9-6 12 0 3 1 4 3 4 5v3z" fill="#a5a5a5" stroke="#4a4a4a" strokeWidth="1.500" />
                        <circle cx="15.500" cy="13.500" r="6" fill="#cc2b20" />
                        <path d="M13.500 11.500l4 4M17.500 11.500l-4 4" stroke="#fff" strokeWidth="1.500" />
                    </svg>
                </TrayButton>
                <TrayButton $w={60}>ENG</TrayButton>
                <TrayButton aria-label="Network">
                    <Stroke size={20} width={1.800}>
                        <path d="M1.500 9c6-6.500 15-6.500 21 0M5 13c4-4.500 10-4.500 14 0M8.500 16.500c2-2.500 5-2.500 7 0" />
                        <circle cx="12" cy="19.500" r="1.500" fill="currentColor" />
                    </Stroke>
                </TrayButton>
                <TrayButton aria-label="Volume">
                    <Stroke size={21}>
                        <path d="M2 9v6h3.500L11 20V4L5.500 9zM14 9c1.500 1.500 1.500 4.500 0 6M16.500 6.500c3 3 3 8 0 11M19 4c4.500 4.500 4.500 11.500 0 16" />
                    </Stroke>
                </TrayButton>
                <TrayButton aria-label="Battery">
                    <svg width="22" height="20" viewBox="0 0 22 20" fill="#222">
                        <rect x="2" y="6" width="16" height="11" rx="2.500" fill="none" stroke="#222" strokeWidth="1.500" />
                        <path d="M5 8.500h11v6H4zM19.500 9.500h2v4h-2z" />
                        <path d="M5.500 0L1 7h3l-1 5 5-7H5z" stroke="#eee" strokeWidth="0.800" />
                    </svg>
                </TrayButton>
                <Clock dateTime="2025-01-25T02:14">
                    2:14 AM
                    <br />
                    1/25/2025
                </Clock>
            </Tray>
        </Taskbar>
    )
}

export default function App() {
    return (
        <Desktop>
            <GlobalStyle />
            <Player>
                <Reader />
                <Pointer width="14" height="20" viewBox="0 0 14 20">
                    <path d="M1 1v15l4-3 3 6 2-1-3-6h5z" fill="#fff" stroke="#333" />
                </Pointer>
                <TitleBar>
                    <HomeButton aria-label="Home">
                        <Stroke size={22}>
                            <path d="M3 10l9-8.500 9 8.500v10a1.500 1.500 0 0 1-1.500 1.500H16a1 1 0 0 1-1-1V15h-6v5.500a1 1 0 0 1-1 1H4.500A1.500 1.500 0 0 1 3 20z" />
                        </Stroke>
                    </HomeButton>
                    <AppName>
                        <PlayerLogo size={22} />
                        Media Player
                    </AppName>
                    <WindowButton aria-label="Minimize">
                        <Stroke size={12} width={2}><path d="M1 12h22" /></Stroke>
                    </WindowButton>
                    <WindowButton aria-label="Restore">
                        <Stroke size={13} width={2}>
                            <rect x="2" y="6" width="16" height="16" rx="3" />
                            <path d="M6 2h11a5 5 0 0 1 5 5v11" />
                        </Stroke>
                    </WindowButton>
                    <WindowButton aria-label="Close">
                        <Stroke size={13} width={2}><path d="M2 2l20 20M22 2L2 22" /></Stroke>
                    </WindowButton>
                </TitleBar>
                <PlayerControls />
                <Watermark>
                    <WatermarkArabic lang="ar">مستقل</WatermarkArabic>
                    mostaql.com
                </Watermark>
            </Player>
            <TaskbarRow />
        </Desktop>
    )
}
